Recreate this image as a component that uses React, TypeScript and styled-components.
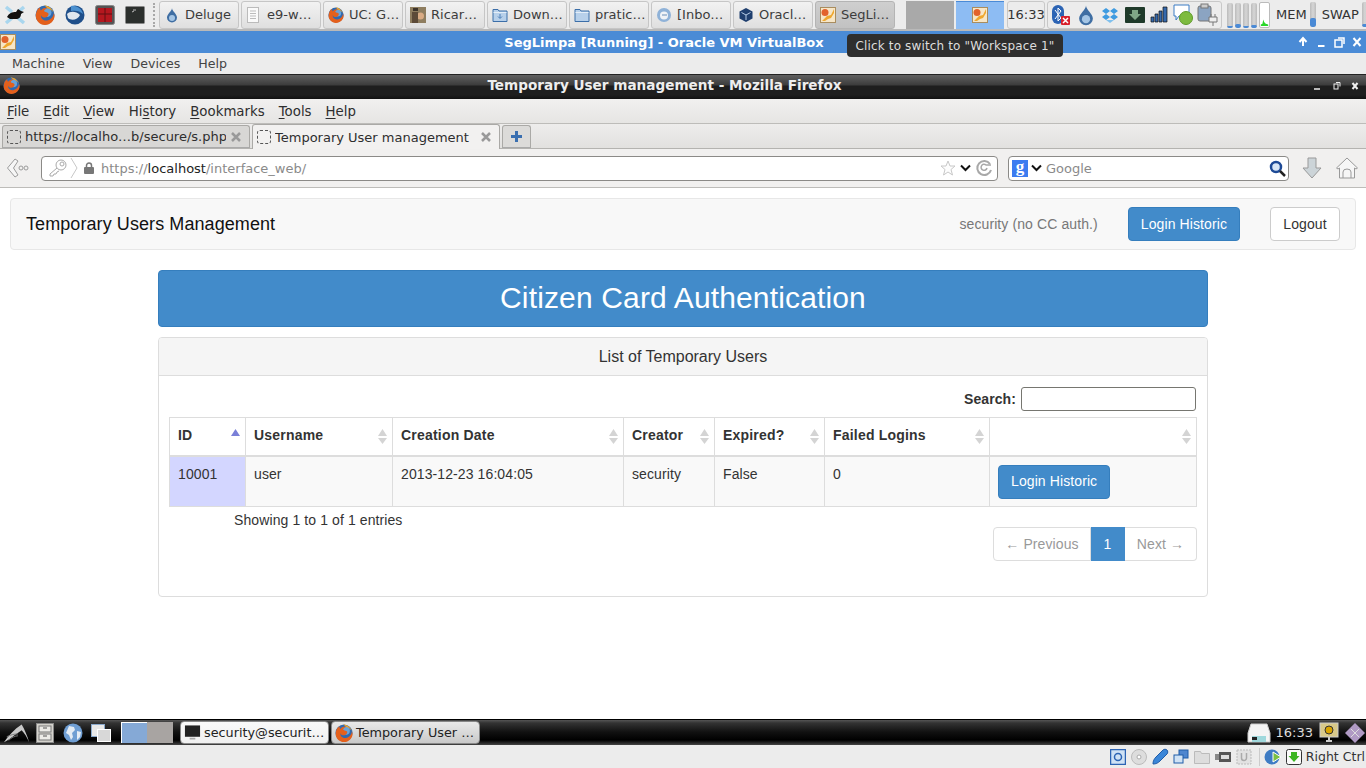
import React from "react";
import styled, { createGlobalStyle } from "styled-components";

const Global = createGlobalStyle`
  html, body { margin: 0; padding: 0; width: 1366px; height: 768px; overflow: hidden; background: #fff; }
  * { box-sizing: border-box; }
`;

const Screen = styled.div`
  position: relative; width: 1366px; height: 768px; display: flex; flex-direction: column;
  font-family: "DejaVu Sans", sans-serif; overflow: hidden;
`;

/* ---- top xfce panel ---- */
const TopPanel = styled.div`
  height: 31px; flex: none; background: #ececec; border-bottom: 2px solid #b9b9b9;
  display: flex; align-items: center;
`;
const Launcher = styled.div`
  width: 30px; height: 29px; display: flex; align-items: center; justify-content: center; flex: none;
`;
const Grip = styled.div`
  width: 2px; height: 24px; margin: 0 4px 0 3px; border-left: 2px dotted #a8a8a8; flex: none;
`;
const TaskRow = styled.div`display: flex; gap: 2px; flex: none;`;
const Task = styled.div<{ $active?: boolean }>`
  width: 80px; height: 28px; border: 1px solid ${p => (p.$active ? "#b4b4b4" : "#c6c6c6")}; border-radius: 3px;
  background: ${p => (p.$active ? "linear-gradient(#cfcfcf,#c2c2c2)" : "linear-gradient(#f2f2f2,#dfdfdf)")};
  display: flex; align-items: center; padding-left: 4px; gap: 5px; font-size: 13px; color: #3c3c3c; white-space: nowrap; overflow: hidden;
`;
const TaskLabel = styled.span<{ $ml?: number }>`margin-left: ${p => p.$ml ?? 0}px;`;
const Pager = styled.div`display: flex; margin-left: 11px; flex: none; gap: 2px;`;
const PagerGray = styled.div`width: 48px; height: 28px; background: #a9a9a9;`;
const PagerBlue = styled.div`
  width: 48px; height: 28px; background: #8dbcf3; border-top: 1px solid #4a8ad6;
  display: flex; align-items: center; justify-content: center;
`;
const Clock = styled.div`
  width: 38px; height: 28px; margin-left: 3px; border: 1px solid #c8c8c8; border-radius: 3px; background: #ececec;
  font-size: 13px; color: #333; display: flex; align-items: center; justify-content: center; flex: none;
`;
const Tray = styled.div`
  width: 175px; height: 28px; margin-left: 2px; border: 1px solid #c8c8c8; border-radius: 3px;
  display: flex; align-items: center; padding-left: 2px; gap: 2px; flex: none;
`;
const TrayCell = styled.div`width: 22.5px; height: 24px; display: flex; align-items: center; justify-content: center; flex: none;`;
const Meters = styled.div<{ $ml: number }>`display: flex; gap: 2px; margin-left: ${p => p.$ml}px; align-items: flex-end; flex: none;`;
const Meter = styled.div<{ $fill: number }>`
  width: 6px; height: 25px; border-radius: 2px; background: linear-gradient(90deg,#bbb,#d6d6d6,#bbb); position: relative; overflow: hidden;
  &::after { content: ""; position: absolute; left: 0; right: 0; bottom: 0; height: ${p => p.$fill}px; background: #4a8ad6; border-radius: 2px; }
`;
const GreenMeter = styled.div`
  width: 11px; height: 26px; background: #fff; border: 1px solid #bbb; border-radius: 2px; display: flex; align-items: flex-end; overflow: hidden;
`;
const MeterLabel = styled.div`font-size: 13px; color: #333; margin: 0 0 0 6px; flex: none;`;

/* ---- virtualbox window ---- */
const VboxTitle = styled.div`
  position: relative; height: 22px; flex: none; background: #4a8bd6; color: #fff; font-size: 13px; font-weight: bold;
  display: flex; align-items: center; justify-content: center; padding-right: 38px;
`;
const TitleIcon = styled.div`position: absolute; left: 0; top: 3px; width: 16px; height: 16px;`;
const WinButtons = styled.div`position: absolute; right: 1px; top: 0; bottom: 0; display: flex; align-items: center;`;
const VboxMenu = styled.div`
  height: 22px; flex: none; background: #ececec; border-bottom: 1px solid #222; display: flex; align-items: center;
  padding-left: 12px; gap: 18px; font-size: 12.6px; color: #444;
`;

/* ---- firefox ---- */
const FoxTitle = styled.div`
  position: relative; height: 24px; flex: none; color: #eee; font-size: 13.6px; font-weight: bold;
  background: linear-gradient(#606060 0,#3c3c3c 10px,#1e1e1e 11px,#1e1e1e 20px,#111 24px);
  display: flex; align-items: center; justify-content: center; padding: 0 37px 4px 0;
`;
const FoxIcon = styled.div`position: absolute; left: 3px; top: 2px;`;
const FoxWinButtons = styled.div`position: absolute; right: 4px; top: 0; bottom: 2px; display: flex; align-items: center;`;
const FoxMenu = styled.div`
  height: 25px; flex: none; background: linear-gradient(#f1f0ef,#e6e5e3); border-bottom: 1px solid #bdbcb9; display: flex; align-items: center;
  padding-left: 7px; gap: 14px; font-size: 13.33px; color: #2e2e2e;
  u { text-underline-offset: 2px; }
`;
const TabBar = styled.div`
  height: 25px; flex: none; background: linear-gradient(#eeedec,#e2e1df); border-bottom: 1px solid #b4b3b0;
  display: flex; align-items: flex-end; padding-left: 2px; gap: 2px; font-size: 13px; color: #2e2e2e;
`;
const Tab = styled.div<{ $active?: boolean; $w: number }>`
  width: ${p => p.$w}px; height: ${p => (p.$active ? 25 : 23)}px; flex: none; display: flex; align-items: center; padding-left: 4px; gap: 4px;
  border: 1px solid #aaa9a6; border-bottom: ${p => (p.$active ? "none" : "1px solid #aaa")}; border-radius: 3px 3px 0 0;
  background: ${p => (p.$active ? "#f2f1f0" : "#d8d7d5")}; white-space: nowrap; margin-bottom: ${p => (p.$active ? "-1px" : "0")};
`;
const TabLabel = styled.span`flex: 1; overflow: hidden;`;
const TabClose = styled.svg`flex: none; margin-right: 7px;`;
const FavHolder = styled.span`width: 14px; height: 14px; border: 1px dashed #555; border-radius: 3px; flex: none;`;
const NewTab = styled.div`
  width: 29px; height: 23px; border: 1px solid #aaa9a6; border-bottom: 1px solid #aaa; border-radius: 3px 3px 0 0; background: #dcdbd9;
  display: flex; align-items: center; justify-content: center; flex: none;
`;
const NavBar = styled.div`
  height: 39px; flex: none; background: #f1f0ef; border-bottom: 1px solid #bdbcb9; display: flex; align-items: center; padding: 0 0 0 6px;
`;
const BackBtn = styled.div`width: 24px; height: 24px; flex: none; margin-right: 11px; display: flex; align-items: center;`;
const UrlBox = styled.div`
  width: 957px; height: 25px; flex: none; background: #fff; border: 1px solid #8b8a87; border-radius: 4px;
  display: flex; align-items: center; font-size: 13px; color: #8a8a8a; padding-left: 6px;
`;
const UrlIdentity = styled.div`display: flex; align-items: center; width: 33px; flex: none;`;
const UrlLock = styled.svg`flex: none; margin-left: 2px;`;
const UrlText = styled.div`flex: 1; margin-left: 6px; b { font-weight: normal; color: #222; }`;
const UrlRight = styled.div`display: flex; align-items: center; gap: 4px; padding-right: 4px;`;
const SearchBox = styled.div`
  width: 281px; height: 25px; flex: none; margin-left: 10px; background: #fff; border: 1px solid #8b8a87; border-radius: 4px;
  display: flex; align-items: center; font-size: 13px; color: #8a8a8a; padding: 0 2px 0 3px; gap: 3px;
`;
const GoogleG = styled.span`
  width: 16px; height: 17px; background: #3c7cf0; color: #fff; font: bold 17px/14px "Liberation Serif", serif; text-align: center; flex: none;
`;
const SearchText = styled.div`flex: 1; margin-left: 1px;`;
const NavTool = styled.div<{ $ml: number }>`margin-left: ${p => p.$ml}px; width: 24px; height: 24px; flex: none;`;

/* ---- page ---- */
const Page = styled.div`
  flex: 1; min-height: 0; background: #fff; padding: 10px 10px 0; font-family: "Liberation Sans", Arial, sans-serif; color: #333; letter-spacing: 0.1px;
`;
const Navbar = styled.div`
  height: 52px; background: #f8f8f8; border: 1px solid #e7e7e7; border-radius: 4px; display: flex; align-items: center;
  padding: 0 15px 0 15px;
`;
const Brand = styled.div`font-size: 18px; color: #111; flex: 1; letter-spacing: 0.08px;`;
const NavText = styled.div`font-size: 14px; color: #777; margin-right: 30px;`;
const Btn = styled.div`
  height: 34px; padding: 0 12px; display: inline-flex; align-items: center; font-size: 14px; border-radius: 4px; border: 1px solid #357ebd;
  background: #428bca; color: #fff;
`;
const LogoutBtn = styled(Btn)`
  width: 70px; justify-content: center; padding: 0; background: #fff; border-color: #ccc; color: #333; margin-left: 30px;
`;
const Container = styled.div`width: 1050px; margin: 20px auto 0;`;
const Banner = styled.div`
  height: 57px; background: #428bca; border-radius: 4px; border: 1px solid #357ebd; color: #fff; font-size: 30px; letter-spacing: 0.15px;
  display: flex; align-items: center; justify-content: center; padding-bottom: 2px;
`;
const Panel = styled.div`
  margin-top: 10px; height: 260px; border: 1px solid #ddd; border-radius: 4px; background: #fff;
`;
const PanelHead = styled.div`
  height: 38px; background: #f5f5f5; border-bottom: 1px solid #ddd; border-radius: 3px 3px 0 0; font-size: 16px; letter-spacing: 0;
  display: flex; align-items: center; justify-content: center;
`;
const PanelBody = styled.div`padding: 11px 10px 0 10px;`;
const SearchRow = styled.div`
  display: flex; justify-content: flex-end; align-items: center; gap: 5px; height: 24px; font-size: 14px; font-weight: bold; padding-right: 1px; margin-bottom: 6px;
`;
const SearchInput = styled.div`width: 175px; height: 24px; background: #fff; border: 1px solid #767670; border-radius: 3px;`;
const Table = styled.table`
  width: 1027px; border-collapse: collapse; table-layout: fixed; font-size: 14px; border: 1px solid #ddd;
`;
const Th = styled.th<{ $w: number }>`
  width: ${p => p.$w}px; height: 38px; border: 1px solid #ddd; border-bottom: 2px solid #ddd; padding: 0 8px 2px; text-align: left;
  position: relative; font-weight: bold; letter-spacing: 0.2px;
`;
const Sort = styled.span`position: absolute; right: 5px; top: 11px; width: 9px; height: 16px; display: block;`;
const Td = styled.td<{ $sorted?: boolean }>`
  height: 51px; border: 1px solid #ddd; padding: 9px 8px 0; vertical-align: top; line-height: 17px;
  background: ${p => (p.$sorted ? "#d3d6ff" : "#f9f9f9")};
`;
const TdBtn = styled(Td)`padding-top: 8px;`;
const Info = styled.div`font-size: 14px; padding-left: 65px; height: 20px; line-height: 26px;`;
const PagerNav = styled.div`
  display: flex; justify-content: flex-end; font-size: 14px;
`;
const PageItem = styled.div<{ $active?: boolean; $w: number; $first?: boolean; $last?: boolean }>`
  width: ${p => p.$w}px; height: 34px; display: flex; align-items: center; justify-content: center;
  background: ${p => (p.$active ? "#428bca" : "#fff")}; color: ${p => (p.$active ? "#fff" : "#999")};
  border: 1px solid ${p => (p.$active ? "#428bca" : "#ddd")};
  border-left-width: ${p => (p.$first ? 1 : 0)}px;
  border-radius: ${p => (p.$first ? "4px 0 0 4px" : p.$last ? "0 4px 4px 0" : "0")};
`;

/* ---- bottom ---- */
const BottomPanel = styled.div`
  height: 26px; flex: none; background: linear-gradient(#555 0,#333 3px,#111 12px,#000 20px,#444 25px);
  border-top: 1px solid #000; display: flex; align-items: center; padding-left: 3px;
`;
const BottomIcon = styled.div`width: 28px; height: 24px; display: flex; align-items: center; justify-content: center; flex: none;`;
const Desk = styled.div<{ $c: string; $current?: boolean }>`
  width: 26px; height: 21px; background: ${p => p.$c}; flex: none;
  border-top: ${p => (p.$current ? "1px solid #fff" : "none")}; border-left: ${p => (p.$current ? "1px solid #fff" : "none")};
`;
const Desks = styled.div`display: flex; margin-left: 6px; margin-right: 7px; flex: none;`;
const Window = styled.div<{ $active?: boolean }>`
  width: 149px; height: 23px; border: 1px solid #888; border-radius: 4px; flex: none; margin-right: 2px;
  background: ${p => (p.$active ? "linear-gradient(#e9e9e9,#c9c9c9)" : "linear-gradient(#fafafa,#f0f0f0)")};
  display: flex; align-items: center; padding-left: 3px; gap: 3px; font-size: 12.8px; color: #222; white-space: nowrap; overflow: hidden;
`;
const BottomRight = styled.div`
  margin-left: auto; display: flex; align-items: center; color: #ddd; font-size: 13px; padding-right: 1px;
`;
const Printer = styled.svg`margin-right: 5px; flex: none;`;
const BottomTrayIcon = styled.svg`margin-left: 4px; flex: none;`;
const StatusBar = styled.div`
  height: 23px; flex: none; background: #ececec; display: flex; align-items: center; justify-content: flex-end; padding-right: 1px; font-size: 12.5px; color: #333;
`;
const StatusIcon = styled.div`width: 19px; height: 18px; display: flex; align-items: center; justify-content: center; flex: none; margin-right: 2px;`;
const StatusSep = styled.div`width: 1px; height: 18px; background: #ccc; margin: 0 4px 0 3px; flex: none;`;
const Tooltip = styled.div`
  position: absolute; left: 847px; top: 34px; width: 216px; height: 23px; background: #2e2e2e; border-radius: 4px; color: #ddd;
  font-size: 12px; display: flex; align-items: center; justify-content: center; letter-spacing: 0.14px; z-index: 5;
`;

/* ---- icons ---- */
const Fox = ({ s = 16 }: { s?: number }) => (
  <svg width={s} height={s} viewBox="0 0 20 20">
    <circle cx="10" cy="10" r="9.500" fill="#2f69b0" />
    <circle cx="12" cy="7.500" r="4.500" fill="#6aa3d8" />
    <path d="M.8 11C1 6 3 3.500 5 2.500 5 4 5.500 5 6 5.500 7.500 3 11 2.500 13 3c-2 .5-3.500 1.500-4 3 1 1.500 4 1 4.500 2.500C14 11 11 13 8.500 12.500 7 12.200 6 11 6 10c-.5 3 2 6 6 5.500 3-.4 5-2.500 6-4.500.5-.9.7-2 .7-3 .7 1 .8 3 .8 3 0 4.500-4 9-9.500 9S.6 15 .8 11z" fill="#e4601c" />
    <path d="M9 .5c4 0 8 2.500 9.500 7-1.500-2-3.500-4-6.500-4.500C11.500 2 10 1 9 .5z" fill="#f5a623" />
  </svg>
);
const Drop = ({ s = 16 }: { s?: number }) => (
  <svg width={s} height={s} viewBox="0 0 16 16">
    <path d="M8 1C8 4 3 7 3 10.500a5 5 0 0 0 10 0C13 7 8 4 8 1z" fill="#3f6ea3" />
    <ellipse cx="8" cy="11" rx="3" ry="3" fill="#a4c5e5" />
  </svg>
);
const VBoxSeg = ({ s = 16 }: { s?: number }) => (
  <svg width={s} height={s} viewBox="0 0 16 16">
    <rect x=".5" y=".5" width="15" height="15" fill="#f6e6c8" stroke="#a98d5f" />
    <circle cx="5" cy="5.500" r="3.500" fill="#e2622c" />
    <path d="M2 14 7 9l4-1 3-6v4l-3 5-3 1-3 2z" fill="#efa72e" />
  </svg>
);
const Folder = ({ down }: { down?: boolean }) => (
  <svg width="16" height="16" viewBox="0 0 16 16">
    <path d="M1 4V2.500h5L7 4h8v10.500H1z" fill="#b7d0ea" stroke="#3b6ea8" />
    <path d="M1.500 5.500h13" stroke="#e4eef8" />
    {down && <path d="M8 7v4M6 9.500 8 11.500 10 9.500" stroke="#4b7fb8" fill="none" />}
  </svg>
);
const Doc = () => (
  <svg width="14" height="16" viewBox="0 0 14 16">
    <rect x="1.500" y=".5" width="11" height="15" fill="#fafafa" stroke="#bbb" />
    <path d="M4 4h6M4 6.500h6M4 9h6M4 11.500h6" stroke="#bbb" />
  </svg>
);
const Person = () => (
  <svg width="16" height="16" viewBox="0 0 16 16">
    <rect width="16" height="16" fill="#8e7d5f" />
    <circle cx="10.500" cy="9" r="3.500" fill="#d9ab84" />
    <path d="M2 5h6v11H2z" fill="#5c4a38" />
    <path d="M3 1h5v3H3z" fill="#3c332a" />
  </svg>
);
const Bird = () => (
  <svg width="16" height="16" viewBox="0 0 16 16">
    <circle cx="8" cy="8" r="7" fill="#8fb2d8" />
    <circle cx="8" cy="8.500" r="4" fill="#f0f3f7" />
    <path d="M6 8h5" stroke="#6b8fb8" />
  </svg>
);
const Cube = () => (
  <svg width="16" height="16" viewBox="0 0 16 16">
    <path d="M8 1 14.500 4.500v7L8 15 1.500 11.500v-7z" fill="#1f3f6e" />
    <path d="M8 8V13M8 8 3.500 5.500M8 8l4.500-2.500" stroke="#b6cce6" />
  </svg>
);

export default function App() {
  return (
    <Screen>
      <Global />
      <TopPanel>
        <Launcher>
          <svg width="22" height="20" viewBox="0 0 22 20">
            <path d="M2 2 8 7M20 2 14 7M2 18 8 13M20 18 14 13" stroke="#a9d6ee" strokeWidth="3.500" />
            <path d="M3 12c2-4 5-5 9-5l2-3 3 2 3 1-3 2c0 3-2 5-5 5H6z" fill="#111" />
          </svg>
        </Launcher>
        <Launcher><Fox s={20} /></Launcher>
        <Launcher>
          <svg width="20" height="20" viewBox="0 0 20 20">
            <circle cx="10" cy="10" r="9.500" fill="#1f4f8a" />
            <path d="M2 9c3-3 9-3 13 1-2 5-9 6-12 3z" fill="#dfe6ee" />
            <path d="M6 1c6-1 11 3 12 8-3-3-7-4-12-3z" fill="#4b90cf" />
          </svg>
        </Launcher>
        <Launcher>
          <svg width="20" height="20" viewBox="0 0 20 20">
            <rect x=".5" y=".5" width="19" height="19" rx="2" fill="#555" stroke="#888" />
            <rect x="3" y="3" width="14" height="14" fill="#b5171f" />
            <path d="M3 9h14M10 3v14" stroke="#601013" />
          </svg>
        </Launcher>
        <Launcher>
          <svg width="20" height="20" viewBox="0 0 20 20">
            <rect x=".5" y="1.500" width="19" height="17" rx="1" fill="#2b2f2d" stroke="#888" />
            <path d="M8 5h3M7 7l2-1" stroke="#bbb" />
          </svg>
        </Launcher>
        <Grip />
        <TaskRow>
          <Task><Drop /><TaskLabel>Deluge</TaskLabel></Task>
          <Task><Doc /><TaskLabel $ml={2}>e9-w…</TaskLabel></Task>
          <Task><Fox /><TaskLabel>UC: G…</TaskLabel></Task>
          <Task><Person /><TaskLabel>Ricar…</TaskLabel></Task>
          <Task><Folder down /><TaskLabel>Down…</TaskLabel></Task>
          <Task><Folder /><TaskLabel>pratic…</TaskLabel></Task>
          <Task><Bird /><TaskLabel>[Inbo…</TaskLabel></Task>
          <Task><Cube /><TaskLabel>Oracl…</TaskLabel></Task>
          <Task $active><VBoxSeg /><TaskLabel>SegLi…</TaskLabel></Task>
        </TaskRow>
        <Pager>
          <PagerGray />
          <PagerBlue><VBoxSeg /></PagerBlue>
        </Pager>
        <Clock>16:33</Clock>
        <Tray>
          <TrayCell>
            <svg width="20" height="22" viewBox="0 0 20 22">
              <rect x="1" y="1" width="12" height="19" rx="6" fill="#2c64b4" />
              <path d="M4 6l6 8-3 3V4l3 3-6 8" stroke="#fff" fill="none" />
              <rect x="10" y="12" width="9" height="9" rx="1" fill="#d8202c" />
              <path d="M12 14l5 5M17 14l-5 5" stroke="#fff" strokeWidth="1.500" />
            </svg>
          </TrayCell>
          <TrayCell><Drop s={22} /></TrayCell>
          <TrayCell>
            <svg width="18" height="18" viewBox="0 0 18 18">
              <path d="M5 2 9 5 5 8 1 5zM13 2l4 3-4 3-4-3zM5 8l4 3-4 3-4-3zM13 8l4 3-4 3-4-3z" fill="#3f9be0" />
              <path d="M5 14l4 3 4-3" fill="#7fc0ee" />
            </svg>
          </TrayCell>
          <TrayCell>
            <svg width="20" height="16" viewBox="0 0 20 16">
              <rect width="20" height="16" rx="1" fill="#1f3a2a" />
              <path d="M7 3h6v4h3l-6 6-6-6h3z" fill="#7fa886" />
            </svg>
          </TrayCell>
          <TrayCell>
            <svg width="18" height="17" viewBox="0 0 18 17">
              <path d="M1 11h3v5H1zM5 8h3v8H5zM9 5h3v11H9zM13 1h4v15h-4z" fill="#3569ad" stroke="#111" strokeWidth=".7" />
            </svg>
          </TrayCell>
          <TrayCell>
            <svg width="22" height="22" viewBox="0 0 22 22">
              <path d="M1 1h15v11H6l-3 4v-4H1z" fill="#fff" stroke="#3d7dc4" />
              <circle cx="13" cy="14" r="6.500" fill="#7dbb3f" stroke="#5e9a29" />
            </svg>
          </TrayCell>
          <TrayCell>
            <svg width="22" height="24" viewBox="0 0 22 24">
              <rect x="1" y="3" width="13" height="15" rx="2" fill="#8ba4c2" stroke="#777" />
              <rect x="4" y="1" width="7" height="4" fill="#ccc" stroke="#777" />
              <path d="M12 14h8v5h-8zM14 14v-3M18 14v-3M16 19v4" fill="#eee" stroke="#777" />
            </svg>
          </TrayCell>
        </Tray>
        <Meters $ml={5}>
          <Meter $fill={2} />
          <Meter $fill={4} />
          <Meter $fill={2} />
          <Meter $fill={3} />
          <GreenMeter>
            <svg width="11" height="10" viewBox="0 0 11 10"><path d="M1 10V8l2-1 1-5 1 3 2 2 3 1v2z" fill="#2bd62b" /></svg>
          </GreenMeter>
        </Meters>
        <MeterLabel>MEM</MeterLabel>
        <Meters $ml={3}>
          <Meter $fill={9} />
        </Meters>
        <MeterLabel>SWAP</MeterLabel>
        <Meters $ml={3}>
          <Meter $fill={3} />
        </Meters>
      </TopPanel>

      <VboxTitle>
        <TitleIcon><VBoxSeg /></TitleIcon>
        SegLimpa [Running] - Oracle VM VirtualBox
        <WinButtons>
          <svg width="68" height="14" viewBox="0 0 68 14">
            <path d="M6 11V4M2.500 7 6 3l3.500 4" stroke="#fff" strokeWidth="2" fill="none" />
            <path d="M21 11h6.500" stroke="#fff" strokeWidth="2" />
            <rect x="38" y="5" width="7" height="7" fill="none" stroke="#fff" strokeWidth="1.500" />
            <path d="M41 3h6v6" fill="none" stroke="#fff" strokeWidth="1.500" />
            <path d="M56.500 3l7 8M63.500 3l-7 8" stroke="#fff" strokeWidth="2" />
          </svg>
        </WinButtons>
      </VboxTitle>
      <VboxMenu>
        <span>Machine</span><span>View</span><span>Devices</span><span>Help</span>
      </VboxMenu>

      <FoxTitle>
        <FoxIcon><Fox s={17} /></FoxIcon>
        Temporary User management - Mozilla Firefox
        <FoxWinButtons>
          <svg width="48" height="10" viewBox="0 0 48 10">
            <path d="M0 8h6" stroke="#eee" strokeWidth="1.500" />
            <rect x="20" y="3" width="4" height="5" fill="none" stroke="#eee" />
            <path d="M22 1.500h4v4" fill="none" stroke="#eee" />
            <path d="M38.500 2l5 6M43.500 2l-5 6" stroke="#eee" strokeWidth="2" />
          </svg>
        </FoxWinButtons>
      </FoxTitle>
      <FoxMenu>
        <span><u>F</u>ile</span>
        <span><u>E</u>dit</span>
        <span><u>V</u>iew</span>
        <span>Hi<u>s</u>tory</span>
        <span><u>B</u>ookmarks</span>
        <span><u>T</u>ools</span>
        <span><u>H</u>elp</span>
      </FoxMenu>
      <TabBar>
        <Tab $w={248}>
          <FavHolder />
          <TabLabel>https://localho…b/secure/s.php</TabLabel>
          <TabClose width="12" height="12" viewBox="0 0 12 12">
            <path d="M2 2l8 8M10 2l-8 8" stroke="#999" strokeWidth="2.500" />
          </TabClose>
        </Tab>
        <Tab $active $w={248}>
          <FavHolder />
          <TabLabel>Temporary User management</TabLabel>
          <TabClose width="12" height="12" viewBox="0 0 12 12">
            <path d="M2 2l8 8M10 2l-8 8" stroke="#999" strokeWidth="2.500" />
          </TabClose>
        </Tab>
        <NewTab>
          <svg width="13" height="13" viewBox="0 0 13 13">
            <path d="M6.500 1v11M1 6.500h11" stroke="#3a6fb0" strokeWidth="3" />
          </svg>
        </NewTab>
      </TabBar>
      <NavBar>
        <BackBtn>
          <svg width="24" height="24" viewBox="0 0 24 24">
            <path d="M9 3 1.500 12 9 21l3-2-4.500-7L12 5z" fill="#f6f6f6" stroke="#9b9b9b" />
            <circle cx="15" cy="12" r="2" fill="none" stroke="#9b9b9b" />
            <circle cx="20" cy="12" r="2" fill="none" stroke="#9b9b9b" />
          </svg>
        </BackBtn>
        <UrlBox>
          <UrlIdentity>
            <svg width="32" height="23" viewBox="0 0 32 23">
              <circle cx="13" cy="8" r="5" fill="none" stroke="#aaa" />
              <circle cx="14" cy="7" r="2" fill="none" stroke="#aaa" />
              <path d="M9 11 2 17v2h3l1-2h2l1-2 2-1" fill="none" stroke="#aaa" />
              <path d="M23 1l6 10-6 10" fill="none" stroke="#c8c8c8" />
            </svg>
          </UrlIdentity>
          <UrlLock width="12" height="13" viewBox="0 0 12 13">
            <rect x="1" y="5" width="10" height="7" rx="1" fill="#777" />
            <path d="M3.500 5V3.500a2.500 2.500 0 0 1 5 0V5" fill="none" stroke="#777" strokeWidth="1.500" />
          </UrlLock>
          <UrlText>https://<b>localhost</b>/interface_web/</UrlText>
          <UrlRight>
            <svg width="16" height="16" viewBox="0 0 16 16">
              <path d="M8 1l2 5h5l-4 3.500L12.500 15 8 12l-4.500 3L5 9.500 1 6h5z" fill="#fdfdfd" stroke="#c8c8c8" />
            </svg>
            <svg width="11" height="8" viewBox="0 0 11 8"><path d="M1 1.500 5.500 6 10 1.500" fill="none" stroke="#111" strokeWidth="2" /></svg>
            <svg width="18" height="18" viewBox="0 0 18 18">
              <path d="M15 5a7 7 0 1 0 1 6" fill="none" stroke="#a8a8a8" strokeWidth="2" />
              <path d="M12 9a3 3 0 1 1-1-3h5" fill="none" stroke="#a8a8a8" strokeWidth="1.500" />
            </svg>
          </UrlRight>
        </UrlBox>
        <SearchBox>
          <GoogleG>g</GoogleG>
          <svg width="11" height="8" viewBox="0 0 11 8"><path d="M1 1.500 5.500 6 10 1.500" fill="none" stroke="#111" strokeWidth="2" /></svg>
          <SearchText>Google</SearchText>
          <svg width="17" height="17" viewBox="0 0 17 17">
            <circle cx="7" cy="7" r="5" fill="#d8e6f6" stroke="#1e4a96" strokeWidth="2.500" />
            <path d="M11 11l5 5" stroke="#222" strokeWidth="2.500" />
          </svg>
        </SearchBox>
        <NavTool $ml={11}>
          <svg width="24" height="24" viewBox="0 0 24 24">
            <path d="M8 2h8v10h5L12 22 3 12h5z" fill="#ccd4d8" stroke="#999" />
          </svg>
        </NavTool>
        <NavTool $ml={11}>
          <svg width="24" height="24" viewBox="0 0 24 24">
            <path d="M12 2 1.500 12l1.500 1 1.500-1V22h15V12l1.500 1 1.500-1z" fill="#f6f6f6" stroke="#999" />
            <path d="M8 22v-6a4 3 0 0 1 8 0v6" fill="none" stroke="#999" />
          </svg>
        </NavTool>
      </NavBar>

      <Page>
        <Navbar>
          <Brand>Temporary Users Management</Brand>
          <NavText>security (no CC auth.)</NavText>
          <Btn>Login Historic</Btn>
          <LogoutBtn>Logout</LogoutBtn>
        </Navbar>
        <Container>
          <Banner>Citizen Card Authentication</Banner>
          <Panel>
            <PanelHead>List of Temporary Users</PanelHead>
            <PanelBody>
              <SearchRow>Search: <SearchInput /></SearchRow>
              <Table>
                <thead>
                  <tr>
                    {[
                      ["ID", 76], ["Username", 147], ["Creation Date", 231], ["Creator", 91],
                      ["Expired?", 110], ["Failed Logins", 165], ["", 207],
                    ].map(([label, w], i) => (
                      <Th key={i} $w={w as number}>
                        {label}
                        <Sort>
                          <svg width="9" height="16" viewBox="0 0 9 16">
                            <path d="M4.500 0 9 7H0z" fill={i === 0 ? "#7a80d8" : "#d4d4d4"} />
                            {i !== 0 && <path d="M4.500 15 9 9H0z" fill="#d4d4d4" />}
                          </svg>
                        </Sort>
                      </Th>
                    ))}
                  </tr>
                </thead>
                <tbody>
                  <tr>
                    <Td $sorted>10001</Td>
                    <Td>user</Td>
                    <Td>2013-12-23 16:04:05</Td>
                    <Td>security</Td>
                    <Td>False</Td>
                    <Td>0</Td>
                    <TdBtn><Btn>Login Historic</Btn></TdBtn>
                  </tr>
                </tbody>
              </Table>
              <Info>Showing 1 to 1 of 1 entries</Info>
              <PagerNav>
                <PageItem $first $w={98}>← Previous</PageItem>
                <PageItem $active $w={34}>1</PageItem>
                <PageItem $last $w={72}>Next →</PageItem>
              </PagerNav>
            </PanelBody>
          </Panel>
        </Container>
      </Page>

      <BottomPanel>
        <BottomIcon>
          <svg width="30" height="22" viewBox="0 0 30 22">
            <path d="M1 21C6 14 12 7 20 2c3 5 6 12 8 19-2-5-5-10-8-13-5 3-10 8-19 13z" fill="#c8c8c8" />
            <path d="M4 15c4-2 8-3 12-3M6 19c3-3 7-5 10-5" stroke="#777" fill="none" />
          </svg>
        </BottomIcon>
        <BottomIcon>
          <svg width="18" height="20" viewBox="0 0 18 20">
            <rect x=".5" y=".5" width="17" height="19" fill="#d4d2cc" stroke="#888" />
            <rect x="3" y="3" width="12" height="6" fill="#ecebe7" stroke="#777" />
            <rect x="3" y="11" width="12" height="6" fill="#ecebe7" stroke="#777" />
            <path d="M7 5h4M7 13h4" stroke="#555" />
          </svg>
        </BottomIcon>
        <BottomIcon>
          <svg width="20" height="20" viewBox="0 0 20 20">
            <circle cx="10" cy="10" r="9.500" fill="#6f9ed3" />
            <path d="M6 3l5 1 1 3-3 3 1 4-2 3-2-5-3-2zM14 8l4 1-1 5-3 3z" fill="#e3ebf4" />
          </svg>
        </BottomIcon>
        <BottomIcon>
          <svg width="20" height="18" viewBox="0 0 20 18">
            <rect x=".5" y=".5" width="13" height="12" fill="#e8e8e8" stroke="#8aa9cc" />
            <rect x="6.500" y="5.500" width="13" height="12" fill="#d8d8d8" stroke="#fff" />
          </svg>
        </BottomIcon>
        <Desks>
          <Desk $c="#85a9d6" $current />
          <Desk $c="#a8a4a2" />
        </Desks>
        <Window>
          <svg width="17" height="18" viewBox="0 0 18 18">
            <rect x="1" y="1" width="16" height="12" fill="#222" />
            <path d="M6 15h6" stroke="#aaa" strokeWidth="2" />
          </svg>
          <span>security@securit…</span>
        </Window>
        <Window $active>
          <Fox s={18} />
          <span>Temporary User …</span>
        </Window>
        <BottomRight>
          <Printer width="24" height="20" viewBox="0 0 24 20">
            <path d="M4 1h16l3 9v9H1v-9z" fill="#f4f4f4" stroke="#ccc" />
            <rect x="5" y="13" width="14" height="6" fill="#9fd8dc" />
            <rect x="5" y="14" width="5" height="3" fill="#222" />
          </Printer>
          <span>16:33</span>
          <BottomTrayIcon width="24" height="22" viewBox="0 0 24 22">
            <rect x="3" y="1" width="18" height="14" fill="#d8c98a" stroke="#ccc" />
            <circle cx="12" cy="8" r="4" fill="#d9a400" stroke="#333" />
            <path d="M9 19h6M12 15v4" stroke="#ccc" strokeWidth="2" />
          </BottomTrayIcon>
          <BottomTrayIcon width="20" height="20" viewBox="0 0 20 20">
            <path d="M10 0 20 10 10 20 0 10z" fill="#b09ac4" />
            <path d="M6 6l8 8M14 6l-8 8" stroke="#ddd" />
          </BottomTrayIcon>
        </BottomRight>
      </BottomPanel>
      <StatusBar>
        <StatusIcon>
          <svg width="16" height="16" viewBox="0 0 16 16"><rect x=".5" y=".5" width="15" height="15" fill="#cfe2f5" stroke="#2c64b4" strokeWidth="1.500" /><circle cx="8" cy="8" r="3.500" fill="none" stroke="#2c64b4" strokeWidth="1.500" /></svg>
        </StatusIcon>
        <StatusIcon>
          <svg width="16" height="16" viewBox="0 0 16 16"><circle cx="8" cy="8" r="7.500" fill="#ddd" stroke="#bbb" /><circle cx="8" cy="8" r="2" fill="#fff" stroke="#aaa" /></svg>
        </StatusIcon>
        <StatusIcon>
          <svg width="17" height="17" viewBox="0 0 17 17"><path d="M1 16c0-3 1-5 3-7l7-7c1-1 3-1 4 0s1 3 0 4l-7 7c-2 2-4 3-7 3z" fill="#3b86d8" stroke="#1f5ca8" /></svg>
        </StatusIcon>
        <StatusIcon>
          <svg width="16" height="16" viewBox="0 0 16 16"><rect x="6" y="1" width="9" height="8" fill="#4e86cf" stroke="#1f5ca8" /><rect x="1" y="6" width="9" height="8" fill="#cfe2f5" stroke="#1f5ca8" /></svg>
        </StatusIcon>
        <StatusIcon>
          <svg width="16" height="14" viewBox="0 0 16 14"><path d="M.5 13.500V1.500h6l1 2h8v10z" fill="#ddd" stroke="#bbb" /></svg>
        </StatusIcon>
        <StatusIcon>
          <svg width="17" height="12" viewBox="0 0 17 12"><rect x="4" y="1" width="12" height="10" fill="#555" /><path d="M0 3h4v6H0z" fill="#888" /><path d="M6 4h8v4H6z" fill="#ddd" /></svg>
        </StatusIcon>
        <StatusIcon>
          <svg width="16" height="16" viewBox="0 0 16 16"><rect x="1" y="1" width="14" height="14" fill="#e2e2e2" stroke="#bbb" strokeDasharray="2 1" /><path d="M5.500 4v5a2.500 2.500 0 0 0 5 0V4" fill="none" stroke="#aaa" strokeWidth="1.500" /></svg>
        </StatusIcon>
        <StatusSep />
        <StatusIcon>
          <svg width="18" height="16" viewBox="0 0 18 16"><circle cx="8" cy="8" r="7.500" fill="#3e7cc4" /><path d="M9 3l8 5-8 5z" fill="#7bc043" stroke="#fff" /></svg>
        </StatusIcon>
        <StatusIcon>
          <svg width="16" height="16" viewBox="0 0 16 16"><rect x=".5" y=".5" width="15" height="15" rx="2" fill="#fafafa" stroke="#333" /><path d="M5 3h6v4h2.500L8 13 2.500 7H5z" fill="#3cb521" /></svg>
        </StatusIcon>
        <span>Right Ctrl</span>
      </StatusBar>
      <Tooltip>Click to switch to "Workspace 1"</Tooltip>
    </Screen>
  );
}
